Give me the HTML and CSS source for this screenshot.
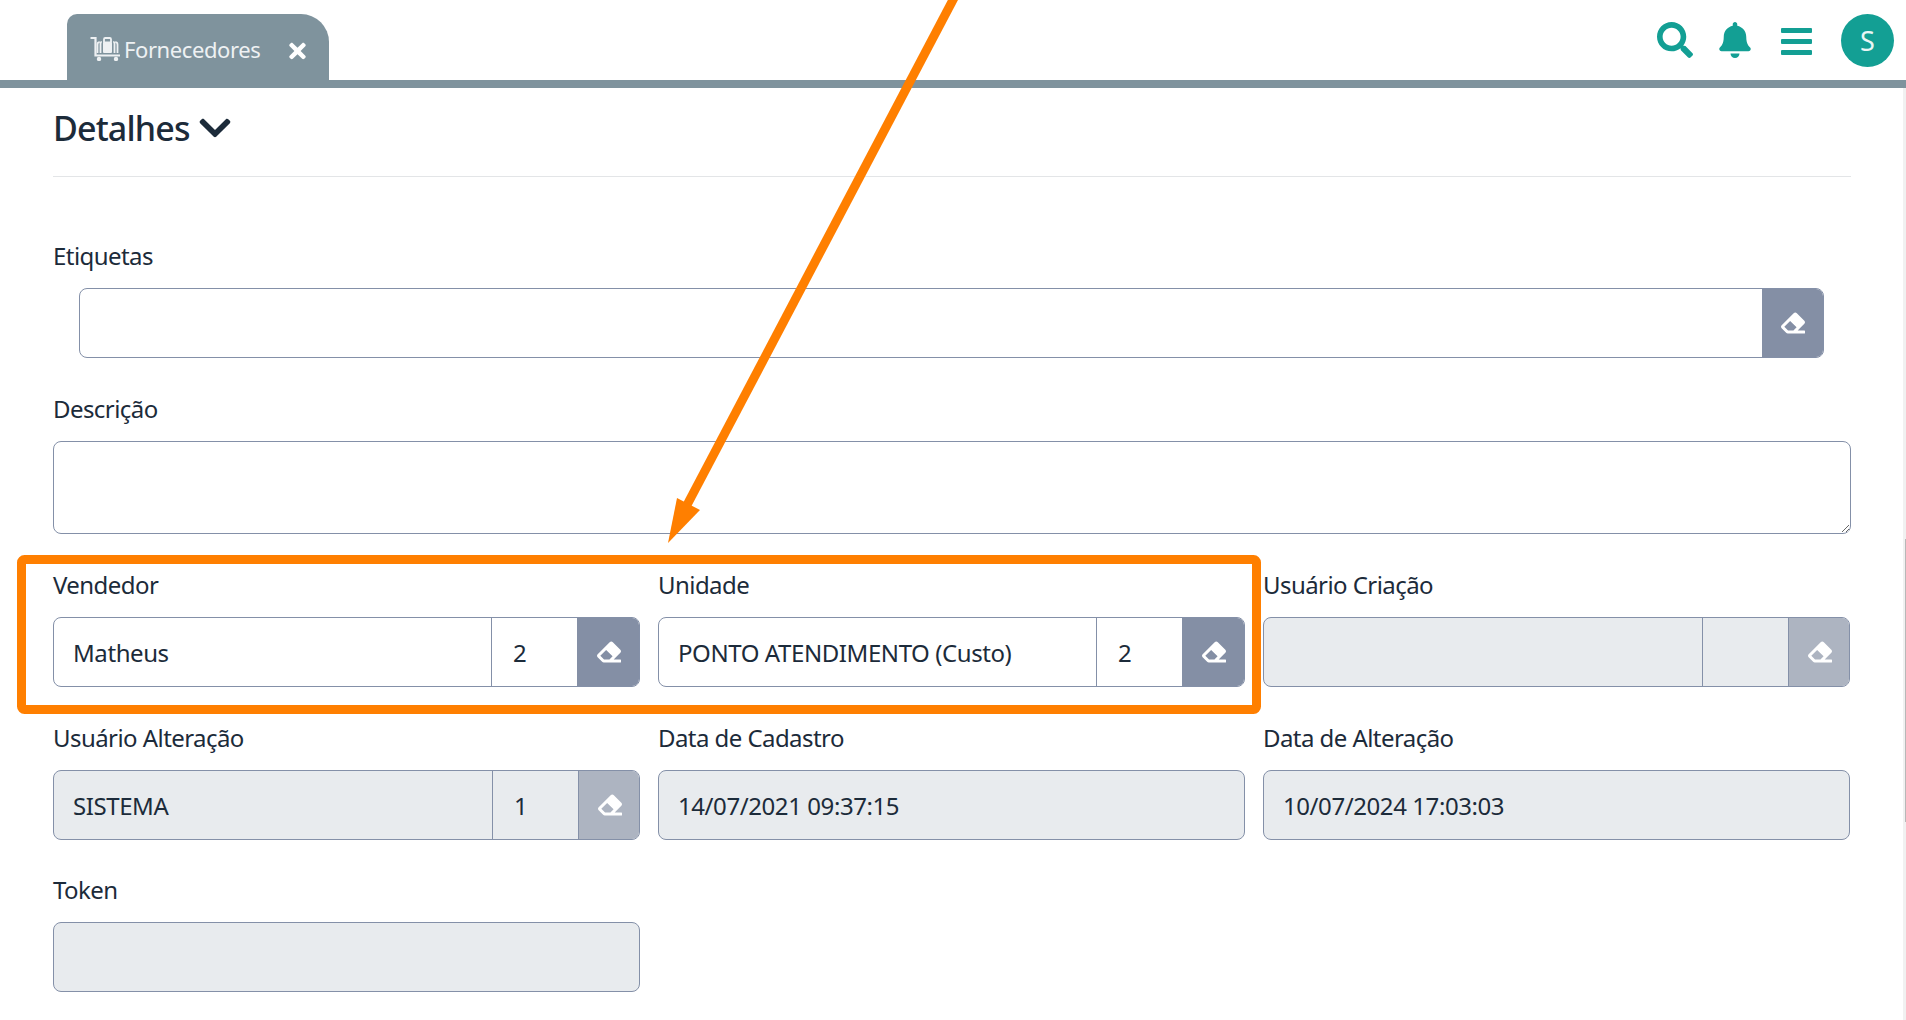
FILE: index.html
```html
<!DOCTYPE html>
<html lang="pt-BR">
<head>
<meta charset="utf-8">
<title>Fornecedores</title>
<link rel="stylesheet" href="styles.css">
</head>
<body>
<div class="page">
  <header class="topbar">
    <div class="tab">
      <svg class="tab-icon" viewBox="0 0 30 24" width="30" height="24">
        <path class="cart-line" d="M0.5 1H5.5V18.5H30"/>
        <circle class="cart-fill" cx="9" cy="22" r="2.2"/>
        <circle class="cart-fill" cx="26" cy="22" r="2.2"/>
        <path class="cart-thin" d="M14 5V2.2C14 1.5 14.6 1 15.2 1H19.8C20.4 1 21 1.5 21 2.2V5"/>
        <rect class="cart-fill" x="13" y="4.5" width="9" height="11.5" rx="1"/>
        <path class="cart-thin" d="M10.5 16V6.5C10.5 5.6 11 5 11.8 5M24.5 16V6.5C24.5 5.6 24 5 23.2 5"/>
        <path class="cart-thin" d="M7.5 16V7.5C7.5 6.2 8.5 5.2 9.8 5.2M27.5 16V7.5C27.5 6.2 26.5 5.2 25.2 5.2"/>
      </svg>
      <span class="tab-label">Fornecedores</span>
      <svg class="tab-close" viewBox="0 0 352 512" width="19" height="24"><path d="M242.72 256l100.07-100.07c12.28-12.28 12.28-32.19 0-44.48l-22.24-22.24c-12.28-12.28-32.19-12.28-44.48 0L176 189.28 75.93 89.21c-12.28-12.28-32.19-12.28-44.48 0L9.21 111.45c-12.28 12.28-12.28 32.19 0 44.48L109.28 256 9.21 356.07c-12.28 12.28-12.28 32.19 0 44.48l22.24 22.24c12.28 12.28 32.2 12.28 44.48 0L176 322.72l100.07 100.07c12.28 12.28 32.2 12.28 44.48 0l22.24-22.24c12.28-12.28 12.28-32.19 0-44.48L242.72 256z"/></svg>
    </div>
    <div class="actions">
      <svg class="icon-search" viewBox="0 0 512 512" width="36" height="36"><path d="M505 442.7L405.3 343c-4.5-4.5-10.6-7-17-7H372c27.6-35.3 44-79.7 44-128C416 93.1 322.9 0 208 0S0 93.1 0 208s93.1 208 208 208c48.3 0 92.7-16.4 128-44v16.3c0 6.4 2.5 12.5 7 17l99.7 99.7c9.4 9.4 24.6 9.4 33.9 0l28.3-28.3c9.4-9.4 9.4-24.6.1-34zM208 336c-70.7 0-128-57.2-128-128 0-70.7 57.2-128 128-128 70.7 0 128 57.2 128 128 0 70.7-57.2 128-128 128z"/></svg>
      <svg class="icon-bell" viewBox="0 0 448 512" width="32" height="36"><path d="M224 512c35.32 0 63.97-28.65 63.97-64H160.03c0 35.35 28.65 64 63.97 64zm215.39-149.71c-19.32-20.76-55.47-51.99-55.47-154.29 0-77.7-54.48-139.9-127.94-155.16V32c0-17.67-14.32-32-31.98-32s-31.98 14.33-31.98 32v20.84C118.56 68.1 64.08 130.3 64.08 208c0 102.3-36.15 133.53-55.47 154.29-6 6.45-8.66 14.16-8.61 21.71.11 16.4 12.98 32 32.1 32h383.8c19.12 0 32-15.6 32.1-32 .05-7.55-2.61-15.27-8.61-21.71z"/></svg>
      <svg class="icon-bars" viewBox="0 0 31 27" width="31" height="27"><rect width="31" height="5" rx="1"/><rect y="11" width="31" height="5" rx="1"/><rect y="22" width="31" height="5" rx="1"/></svg>
      <div class="avatar">S</div>
    </div>
  </header>

  <main class="content">
    <h2 class="section-title">Detalhes
      <svg class="chevron" viewBox="0 0 448 512" width="32" height="36"><path d="M207.029 381.476L12.505 186.951c-9.373-9.373-9.373-24.569 0-33.941l22.688-22.688c9.357-9.357 24.522-9.375 33.901-.04L224 284.505l154.745-154.021c9.379-9.335 24.544-9.317 33.901.04l22.688 22.688c9.373 9.373 9.373 24.569 0 33.941L240.971 381.476c-9.373 9.372-24.569 9.372-33.942 0z"/></svg>
    </h2>
    <hr class="divider">

    <form class="form-grid">
      <div class="field field-wide">
        <div class="label">Etiquetas</div>
        <div class="control control-inset">
          <div class="cell cell-main"></div>
          <div class="cell-btn"><svg class="eraser" viewBox="0 0 512 512" width="24" height="24"><path d="M497.941 273.941c18.745-18.745 18.745-49.137 0-67.882l-160-160c-18.745-18.745-49.136-18.746-67.883 0l-256 256c-18.745 18.745-18.745 49.137 0 67.882l96 96A48.004 48.004 0 0 0 144 480h356c6.627 0 12-5.373 12-12v-40c0-6.627-5.373-12-12-12H355.883l142.058-142.059zm-302.627-62.627l137.373 137.373L265.373 416H150.628l-80-80 124.686-124.686z"/></svg></div>
        </div>
      </div>

      <div class="field field-wide">
        <div class="label">Descrição</div>
        <textarea class="textarea" aria-label="Descrição"></textarea>
      </div>

      <div class="field">
        <div class="label">Vendedor</div>
        <div class="control">
          <div class="cell cell-main">Matheus</div>
          <div class="cell cell-id">2</div>
          <div class="cell-btn"><svg class="eraser" viewBox="0 0 512 512" width="24" height="24"><path d="M497.941 273.941c18.745-18.745 18.745-49.137 0-67.882l-160-160c-18.745-18.745-49.136-18.746-67.883 0l-256 256c-18.745 18.745-18.745 49.137 0 67.882l96 96A48.004 48.004 0 0 0 144 480h356c6.627 0 12-5.373 12-12v-40c0-6.627-5.373-12-12-12H355.883l142.058-142.059zm-302.627-62.627l137.373 137.373L265.373 416H150.628l-80-80 124.686-124.686z"/></svg></div>
        </div>
      </div>

      <div class="field">
        <div class="label">Unidade</div>
        <div class="control">
          <div class="cell cell-main">PONTO ATENDIMENTO (Custo)</div>
          <div class="cell cell-id">2</div>
          <div class="cell-btn"><svg class="eraser" viewBox="0 0 512 512" width="24" height="24"><path d="M497.941 273.941c18.745-18.745 18.745-49.137 0-67.882l-160-160c-18.745-18.745-49.136-18.746-67.883 0l-256 256c-18.745 18.745-18.745 49.137 0 67.882l96 96A48.004 48.004 0 0 0 144 480h356c6.627 0 12-5.373 12-12v-40c0-6.627-5.373-12-12-12H355.883l142.058-142.059zm-302.627-62.627l137.373 137.373L265.373 416H150.628l-80-80 124.686-124.686z"/></svg></div>
        </div>
      </div>

      <div class="field">
        <div class="label">Usuário Criação</div>
        <div class="control control-disabled">
          <div class="cell cell-main"></div>
          <div class="cell cell-id"></div>
          <div class="cell-btn"><svg class="eraser" viewBox="0 0 512 512" width="24" height="24"><path d="M497.941 273.941c18.745-18.745 18.745-49.137 0-67.882l-160-160c-18.745-18.745-49.136-18.746-67.883 0l-256 256c-18.745 18.745-18.745 49.137 0 67.882l96 96A48.004 48.004 0 0 0 144 480h356c6.627 0 12-5.373 12-12v-40c0-6.627-5.373-12-12-12H355.883l142.058-142.059zm-302.627-62.627l137.373 137.373L265.373 416H150.628l-80-80 124.686-124.686z"/></svg></div>
        </div>
      </div>

      <div class="field">
        <div class="label">Usuário Alteração</div>
        <div class="control control-disabled">
          <div class="cell cell-main">SISTEMA</div>
          <div class="cell cell-id">1</div>
          <div class="cell-btn"><svg class="eraser" viewBox="0 0 512 512" width="24" height="24"><path d="M497.941 273.941c18.745-18.745 18.745-49.137 0-67.882l-160-160c-18.745-18.745-49.136-18.746-67.883 0l-256 256c-18.745 18.745-18.745 49.137 0 67.882l96 96A48.004 48.004 0 0 0 144 480h356c6.627 0 12-5.373 12-12v-40c0-6.627-5.373-12-12-12H355.883l142.058-142.059zm-302.627-62.627l137.373 137.373L265.373 416H150.628l-80-80 124.686-124.686z"/></svg></div>
        </div>
      </div>

      <div class="field">
        <div class="label">Data de Cadastro</div>
        <div class="control control-disabled">
          <div class="cell cell-main">14/07/2021 09:37:15</div>
        </div>
      </div>

      <div class="field">
        <div class="label">Data de Alteração</div>
        <div class="control control-disabled">
          <div class="cell cell-main">10/07/2024 17:03:03</div>
        </div>
      </div>

      <div class="field">
        <div class="label">Token</div>
        <div class="control control-disabled">
          <div class="cell cell-main"></div>
        </div>
      </div>
    </form>
  </main>

  <div class="scrollbar"><div class="scrollbar-thumb"></div></div>

  <svg class="annotation" viewBox="0 0 1906 1020" width="1906" height="1020">
    <rect class="note-box" x="21.5" y="559.5" width="1235" height="150" rx="3"/>
    <path class="note-line" d="M954 -2L687 505"/>
    <polygon class="note-head" points="668,543 677,498 700,510"/>
  </svg>
</div>
</body>
</html>
```

FILE: styles.css
```css
* {
  box-sizing: border-box;
}

html,
body {
  margin: 0;
  height: 100%;
  background: #fff;
  overflow: hidden;
}

body {
  font-family: "Noto Sans", "Open Sans", sans-serif;
  color: #1c2b3a;
}

.page {
  position: relative;
  width: 1906px;
  height: 1020px;
  overflow: hidden;
}

.topbar {
  height: 88px;
  display: flex;
  align-items: flex-start;
  justify-content: space-between;
  border-bottom: 8px solid #7f939d;
  padding-left: 67px;
  padding-right: 12px;
}

.tab {
  width: 262px;
  height: 66px;
  margin-top: 14px;
  background: #7f939d;
  border-radius: 10px 28px 0 0;
  display: flex;
  align-items: center;
  padding-left: 23px;
  color: #eef1f3;
}

.tab-icon {
  flex: none;
  margin-top: 3px;
}

.cart-line {
  fill: none;
  stroke: #eef1f3;
  stroke-width: 2.2;
}

.cart-thin {
  fill: none;
  stroke: #eef1f3;
  stroke-width: 1.8;
}

.cart-fill {
  fill: #eef1f3;
}

.tab-label {
  font-size: 22px;
  margin-left: 4px;
  margin-top: 3px;
  letter-spacing: -0.4px;
}

.tab-close {
  fill: #fff;
  margin-left: 28px;
  margin-top: 8px;
}

.actions {
  display: flex;
  align-items: center;
  height: 53px;
  margin-top: 14px;
  color: #139f94;
}

.actions svg {
  fill: #139f94;
  flex: none;
}

.icon-search {
  margin-right: 26px;
  margin-top: -1px;
}

.icon-bell {
  margin-right: 30px;
  margin-top: -1px;
}

.icon-bars {
  margin-right: 29px;
  margin-top: 1px;
}

.avatar {
  width: 53px;
  height: 53px;
  border-radius: 50%;
  background: #139f94;
  color: #eaf6f5;
  font-size: 27px;
  display: flex;
  align-items: center;
  justify-content: center;
}

.content {
  padding-left: 53px;
  width: 1851px;
}

.section-title {
  margin: 17px 0 0;
  height: 46px;
  font-size: 34px;
  line-height: 46px;
  font-weight: 500;
  display: flex;
  align-items: center;
  gap: 9px;
  letter-spacing: -0.85px;
}

.chevron {
  fill: #1c2b3a;
}

.divider {
  margin: 25px 0 0;
  border: 0;
  border-top: 1px solid #e3e5e7;
}

.form-grid {
  display: grid;
  grid-template-columns: repeat(3, 587px);
  column-gap: 18px;
  row-gap: 32.6px;
  margin-top: 61.2px;
}

.field-wide {
  grid-column: 1 / -1;
}

.label {
  height: 36px;
  line-height: 36px;
  margin-bottom: 14px;
  font-size: 24px;
  letter-spacing: -0.56px;
}

.control {
  height: 70px;
  display: flex;
  border: 1px solid #8490a8;
  border-radius: 8px;
  overflow: hidden;
  font-size: 24px;
  letter-spacing: -0.42px;
  background: #fff;
}

.control-inset {
  margin: 0 26px;
}

.control-disabled {
  background: #e8ebee;
}

.cell {
  display: flex;
  align-items: center;
  padding-top: 1px;
}

.cell-main {
  flex: 1;
  min-width: 0;
  padding-left: 19px;
}

.cell-id {
  flex: none;
  width: 86px;
  padding-left: 21px;
  border-left: 1px solid #8490a8;
}

.cell-btn {
  flex: none;
  width: 63px;
  margin: -1px -1px -1px 0;
  background: #848fa5;
  display: flex;
  align-items: center;
  justify-content: center;
}

.control-inset .cell-btn,
.control-disabled .cell-btn {
  width: 62px;
}

.control-disabled .cell-btn {
  background: #adb4c1;
  border-left: 1px solid #8490a8;
}

.eraser {
  fill: #fff;
}

.textarea {
  display: block;
  width: 1798px;
  height: 93.3px;
  margin: 0 0 0.5px;
  border: 1px solid #8490a8;
  border-radius: 8px;
  background: #fff;
  outline: 0;
  padding: 8px 20px;
  font: inherit;
}

.scrollbar {
  position: absolute;
  top: 88px;
  right: 0;
  bottom: 0;
  width: 3px;
  background: #f1f1f1;
}

.scrollbar-thumb {
  position: absolute;
  top: 451px;
  right: 0;
  width: 1px;
  height: 283px;
  background: #b8b8b8;
}

.annotation {
  position: absolute;
  top: 0;
  left: 0;
  pointer-events: none;
}

.note-box {
  fill: none;
  stroke: #ff7f00;
  stroke-width: 9;
}

.note-line {
  fill: none;
  stroke: #ff7f00;
  stroke-width: 9;
}

.note-head {
  fill: #ff7f00;
}
```
